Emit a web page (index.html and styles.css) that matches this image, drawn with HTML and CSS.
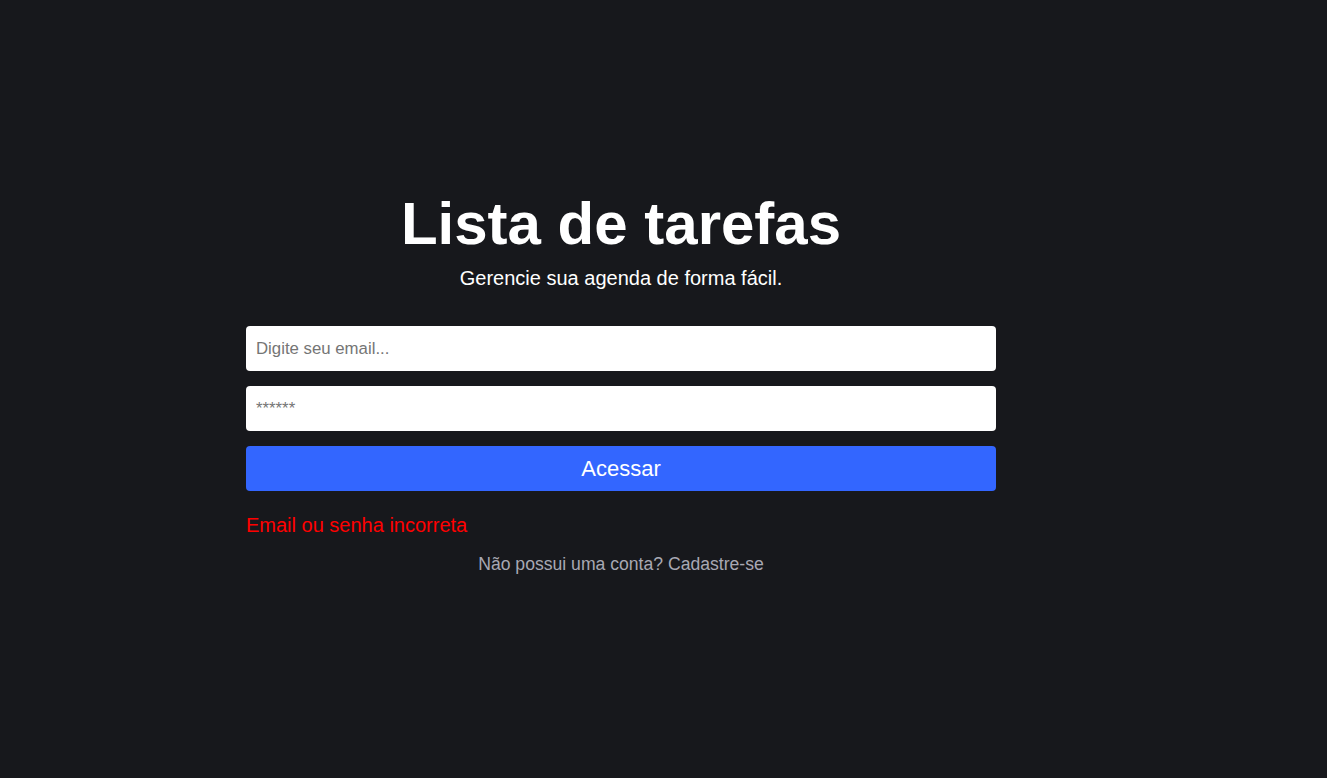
FILE: index.html
```html
<!DOCTYPE html>
<html lang="pt-BR">
<head>
<meta charset="utf-8">
<title>Lista de tarefas</title>
<link rel="stylesheet" href="styles.css">
</head>
<body>
<div class="page">
  <main class="login">
    <h1 class="title">Lista de tarefas</h1>
    <p class="subtitle">Gerencie sua agenda de forma fácil.</p>
    <form class="form">
      <input class="field" type="text" placeholder="Digite seu email...">
      <input class="field" type="password" placeholder="******">
      <button class="submit" type="button">Acessar</button>
    </form>
    <p class="error">Email ou senha incorreta</p>
    <a class="signup" href="#">Não possui uma conta? Cadastre-se</a>
  </main>
</div>
</body>
</html>
```
FILE: styles.css
```css
html, body {
  margin: 0;
  padding: 0;
  background: #17181c;
  height: 100%;
}

body {
  font-family: "Liberation Sans", Arial, sans-serif;
  color: #ffffff;
}

.page {
  display: flex;
  justify-content: center;
  padding-top: 189px;
  padding-right: 85px;
  box-sizing: border-box;
  min-height: 100%;
}

.login {
  width: 750px;
  display: flex;
  flex-direction: column;
  align-items: center;
}

.title {
  margin: 0;
  font-size: 60px;
  font-weight: 700;
  line-height: 69px;
  color: #ffffff;
}

.subtitle {
  margin: 9px 0 0;
  font-size: 20px;
  line-height: 23px;
  color: #ffffff;
}

.form {
  width: 100%;
  margin-top: 36px;
  display: flex;
  flex-direction: column;
  gap: 15px;
}

.field {
  display: block;
  width: 100%;
  height: 45px;
  box-sizing: border-box;
  border: 0;
  border-radius: 4px;
  background: #ffffff;
  padding: 0 10px;
  font-family: "Liberation Sans", Arial, sans-serif;
  font-size: 16.8px;
  color: #222;
  outline: none;
}

.field::placeholder {
  color: #757575;
}

.submit {
  display: block;
  width: 100%;
  height: 45px;
  border: 0;
  border-radius: 4px;
  background: #3366ff;
  color: #ffffff;
  font-family: "Liberation Sans", Arial, sans-serif;
  font-size: 22px;
  cursor: pointer;
}

.error {
  align-self: flex-start;
  margin: 23px 0 0;
  font-size: 20px;
  line-height: 23px;
  color: #ff0000;
}

.signup {
  margin-top: 17px;
  font-size: 17.6px;
  line-height: 20px;
  color: #a8a8b3;
  text-decoration: none;
}
```
